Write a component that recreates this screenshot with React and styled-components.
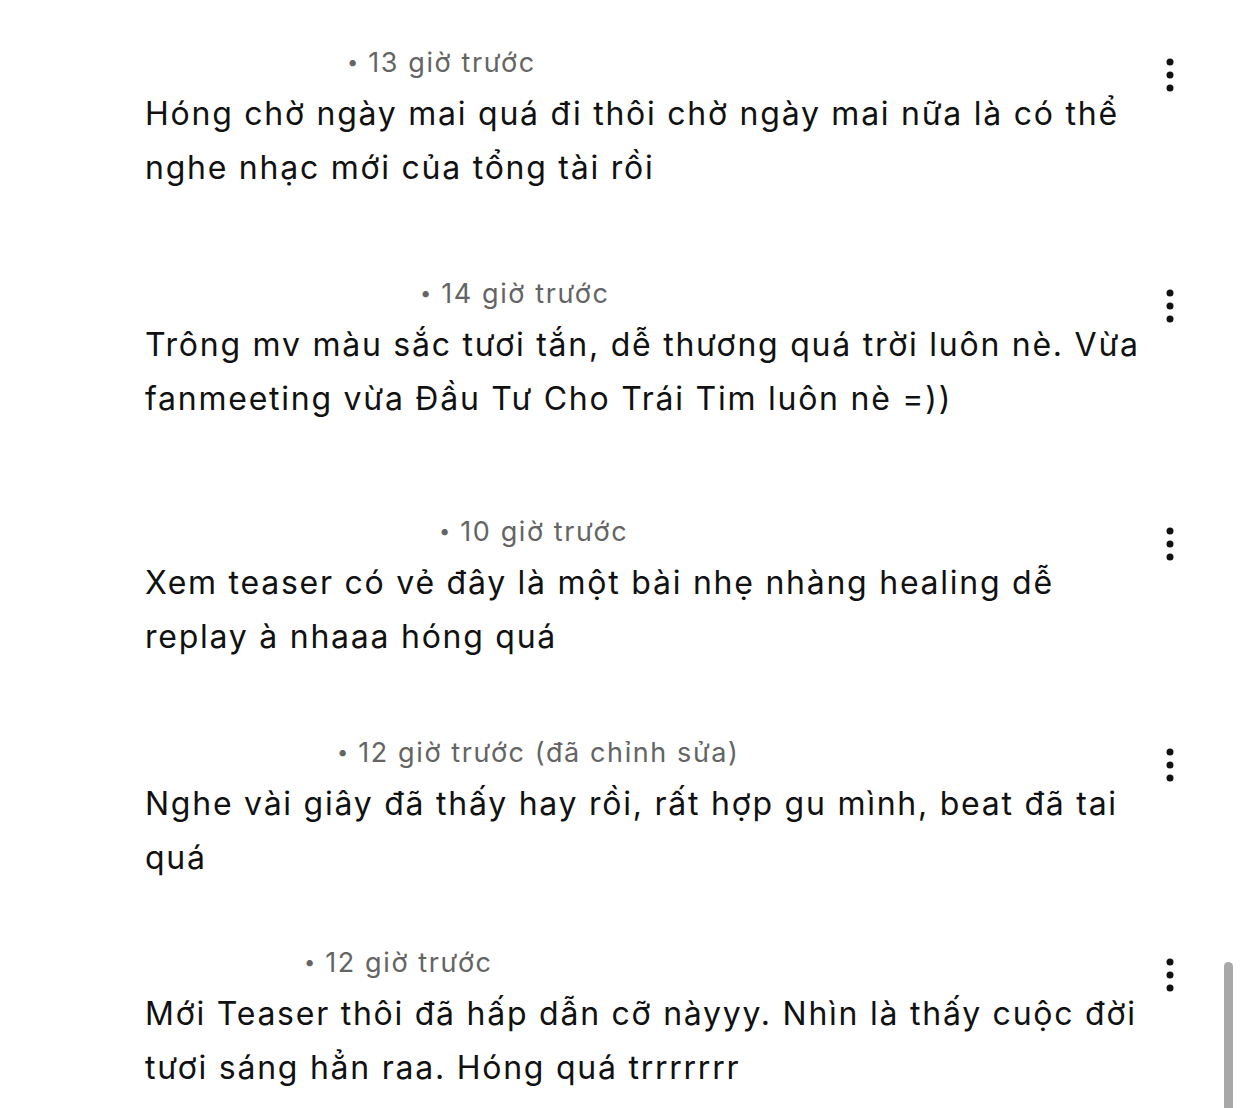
import React from 'react';
import styled, { createGlobalStyle } from 'styled-components';

const GlobalStyle = createGlobalStyle`
  html, body {
    margin: 0;
    padding: 0;
    background: #ffffff;
  }

  body {
    font-family: Inter, "Noto Sans", sans-serif;
    -webkit-font-smoothing: antialiased;
  }
`;

const Page = styled.div`
  position: relative;
  width: 1242px;
  height: 1108px;
  overflow: hidden;
  background: #ffffff;
  box-sizing: border-box;
  padding: 44px 57px 0 145px;
`;

const Comment = styled.div`
  display: flex;
  align-items: flex-start;
  margin-top: ${(p) => p.space}px;
`;

const Content = styled.div`
  flex: 1;
  min-width: 0;
`;

const Meta = styled.div`
  display: flex;
  align-items: center;
  height: 36px;
  margin-bottom: 7px;
  font-size: 27px;
  letter-spacing: 1.6px;
  color: #646464;
  white-space: nowrap;
`;

const Username = styled.span`
  display: inline-block;
  width: ${(p) => p.w}px;
`;

const Dot = styled.span`
  margin-right: 10px;
  font-size: 20px;
  letter-spacing: 0;
`;

const Body = styled.p`
  margin: 0;
  font-size: 32px;
  line-height: 54px;
  letter-spacing: 1.75px;
  color: #111111;
  white-space: nowrap;
`;

const Menu = styled.button`
  flex: none;
  width: 30px;
  height: 34px;
  margin-top: 14px;
  padding: 0;
  border: none;
  background: none;
  display: flex;
  justify-content: center;
  align-items: center;
`;

const Scrollbar = styled.div`
  position: absolute;
  right: 9px;
  top: 962px;
  width: 9px;
  height: 160px;
  border-radius: 5px;
  background: #a8a8a8;
`;

const comments = [
  {
    space: 0,
    user: 202,
    time: '13 giờ trước',
    lines: ['Hóng chờ ngày mai quá đi thôi chờ ngày mai nữa là có thể', 'nghe nhạc mới của tổng tài rồi'],
  },
  {
    space: 80,
    user: 275,
    time: '14 giờ trước',
    lines: ['Trông mv màu sắc tươi tắn, dễ thương quá trời luôn nè. Vừa', 'fanmeeting vừa Đầu Tư Cho Trái Tim luôn nè =))'],
  },
  {
    space: 87,
    user: 294,
    time: '10 giờ trước',
    lines: ['Xem teaser có vẻ đây là một bài nhẹ nhàng healing dễ', 'replay à nhaaa hóng quá'],
  },
  {
    space: 70,
    user: 192,
    time: '12 giờ trước (đã chỉnh sửa)',
    lines: ['Nghe vài giây đã thấy hay rồi, rất hợp gu mình, beat đã tai', 'quá'],
  },
  {
    space: 59,
    user: 159,
    time: '12 giờ trước',
    lines: ['Mới Teaser thôi đã hấp dẫn cỡ nàyyy. Nhìn là thấy cuộc đời', 'tươi sáng hẳn raa. Hóng quá trrrrrrr'],
  },
];

function MoreIcon() {
  return (
    <svg width="8" height="34" viewBox="0 0 8 34">
      <circle cx="4" cy="4" r="3.5" fill="#111" />
      <circle cx="4" cy="17" r="3.5" fill="#111" />
      <circle cx="4" cy="30" r="3.5" fill="#111" />
    </svg>
  );
}

export default function App() {
  return (
    <>
      <GlobalStyle />
      <Page>
        {comments.map((c) => (
          <Comment key={c.time + c.user} space={c.space}>
            <Content>
              <Meta>
                <Username w={c.user} />
                <Dot>•</Dot>
                {c.time}
              </Meta>
              <Body>
                {c.lines.map((line, i) => (
                  <React.Fragment key={line}>
                    {i > 0 && <br />}
                    {line}
                  </React.Fragment>
                ))}
              </Body>
            </Content>
            <Menu type="button" aria-label="Thêm">
              <MoreIcon />
            </Menu>
          </Comment>
        ))}
        <Scrollbar />
      </Page>
    </>
  );
}
